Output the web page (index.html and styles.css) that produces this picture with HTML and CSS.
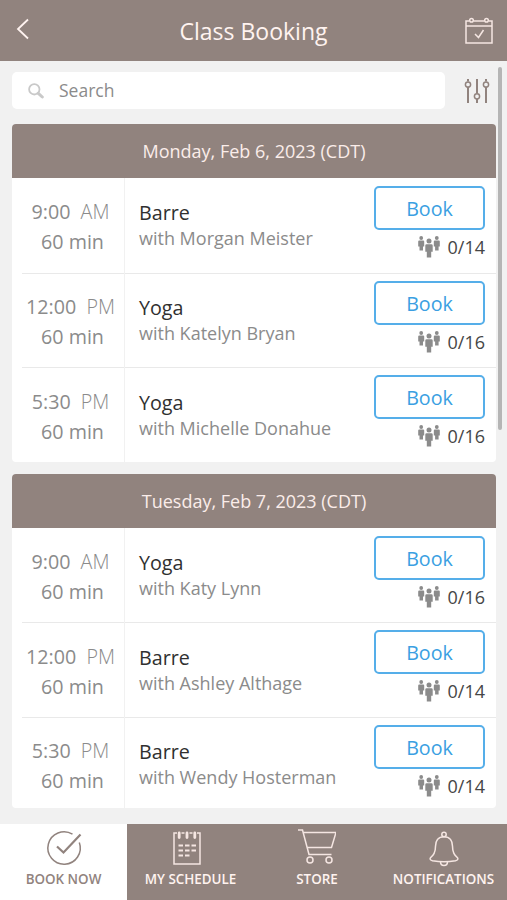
FILE: index.html
```html
<!DOCTYPE html>
<html lang="en">
<head>
<meta charset="utf-8">
<title>Class Booking</title>
<link rel="stylesheet" href="styles.css">
</head>
<body>
<svg class="defs" aria-hidden="true">
  <symbol id="people" viewBox="0 0 22 22">
    <g fill="#8b8b8b">
      <circle cx="3.2" cy="2" r="1.9"/>
      <path d="M1.2 4.400h4q1 0 1 1v5h-1.200v4.100H1.500v-4.100H.2v-5q0-1 1-1z"/>
      <circle cx="18.800" cy="2" r="1.900"/>
      <path d="M16.800 4.400h4q1 0 1 1v5h-1.200v4.100h-3.500v-4.100h-1.300v-5q0-1 1-1z"/>
      <circle cx="11" cy="5.100" r="2.500"/>
      <path d="M8.600 8.200h4.800q1.300 0 1.300 1.300v6.200h-1.500v5.900H8.800v-5.900H7.300V9.500q0-1.300 1.300-1.300z"/>
    </g>
  </symbol>
</svg>
<div class="app">
  <header class="topbar">
    <svg class="back" viewBox="0 0 14 22"><path d="M12 1.500 2 11l10 9.500"/></svg>
    <h1>Class Booking</h1>
    <svg class="calendar" viewBox="0 0 28 28"><path d="M4.500 4H1v22h26V4h-3.500M8.500 4h11M1 9h26"/><circle cx="6.500" cy="3.200" r="1.800"/><circle cx="21.500" cy="3.200" r="1.800"/><path d="M10 17l3.500 3.500L18.500 13"/></svg>
  </header>
  <main class="content">
    <div class="search-row">
      <div class="search">
        <svg viewBox="0 0 16 16"><circle cx="6.300" cy="6.300" r="5.200"/><path class="handle" d="M10.300 10.300 14.300 14"/></svg>
        <span>Search</span>
      </div>
      <svg class="filter" viewBox="0 0 26 26"><path d="M4 1v2.500M4 9v16M13 1v14.500M13 21v4M22 1v2.500M22 9v16"/><g class="knob"><circle cx="4" cy="6.500" r="2.600"/><circle cx="13" cy="18.300" r="2.600"/><circle cx="22" cy="6.500" r="2.600"/></g></svg>
    </div>
    <section class="day">
      <h2>Monday, Feb 6, 2023 (CDT)</h2>
      <article class="slot raised">
        <div class="when"><p>9:00 <i>AM</i></p><p>60 min</p></div>
        <div class="what"><h3>Barre</h3><p>with Morgan Meister</p></div>
        <div class="action"><button>Book</button><div class="count"><svg><use href="#people"/></svg>0/14</div></div>
      </article>
      <article class="slot short raised">
        <div class="when"><p>12:00 <i>PM</i></p><p>60 min</p></div>
        <div class="what"><h3>Yoga</h3><p>with Katelyn Bryan</p></div>
        <div class="action"><button>Book</button><div class="count"><svg><use href="#people"/></svg>0/16</div></div>
      </article>
      <article class="slot">
        <div class="when"><p>5:30 <i>PM</i></p><p>60 min</p></div>
        <div class="what"><h3>Yoga</h3><p>with Michelle Donahue</p></div>
        <div class="action"><button>Book</button><div class="count"><svg><use href="#people"/></svg>0/16</div></div>
      </article>
    </section>
    <section class="day">
      <h2>Tuesday, Feb 7, 2023 (CDT)</h2>
      <article class="slot short raised">
        <div class="when"><p>9:00 <i>AM</i></p><p>60 min</p></div>
        <div class="what"><h3>Yoga</h3><p>with Katy Lynn</p></div>
        <div class="action"><button>Book</button><div class="count"><svg><use href="#people"/></svg>0/16</div></div>
      </article>
      <article class="slot">
        <div class="when"><p>12:00 <i>PM</i></p><p>60 min</p></div>
        <div class="what"><h3>Barre</h3><p>with Ashley Althage</p></div>
        <div class="action"><button>Book</button><div class="count"><svg><use href="#people"/></svg>0/14</div></div>
      </article>
      <article class="slot last raised">
        <div class="when"><p>5:30 <i>PM</i></p><p>60 min</p></div>
        <div class="what"><h3>Barre</h3><p>with Wendy Hosterman</p></div>
        <div class="action"><button>Book</button><div class="count"><svg><use href="#people"/></svg>0/14</div></div>
      </article>
    </section>
    <div class="scrollbar"></div>
  </main>
  <nav class="tabs">
    <a class="tab active"><svg viewBox="0 -1 38 38"><path d="M34.300 12.500A16.200 16.200 0 1 1 27.500 4.200"/><path class="tick" d="M12 16.500l6.500 6L35.500 4.500"/></svg>BOOK NOW</a>
    <a class="tab schedule"><svg viewBox="0 -1 38 38"><path d="M9 3H6v31h26V3h-3M13.500 3h3M21.500 3h3"/><path class="rings" d="M11.200 3v4.500M19 3v4.500M26.800 3v4.500"/><path class="lines" d="M10.500 15.500h4.500M17 15.500h4.500M23.500 15.500H28M10.500 20.500h4.500M17 20.500h4.500M23.500 20.500H28M10.500 25.500h4.500M17 25.500h4.500"/></svg>MY SCHEDULE</a>
    <a class="tab"><svg viewBox="0 0 38 38"><path d="M0 1h4.500l6.500 24.500h22.500M5.500 3.500H38L33.500 18.500H9"/><circle cx="12" cy="31" r="3"/><circle cx="31" cy="31" r="3"/></svg>STORE</a>
    <a class="tab"><svg viewBox="0 -1 38 38"><circle cx="19" cy="4.500" r="2.200"/><path d="M19 6.700c-6 0-8.500 4.500-8.500 9.500 0 7-2.500 9-5 11.500-1 1.500 0 2.500 2 3 7 1.300 16 1.300 23 0 2-.5 3-1.500 2-3-2.500-2.500-5-4.500-5-11.500 0-5-2.500-9.500-8.500-9.500z"/><path d="M15.500 31.700c0 5 7 5 7 0"/></svg>NOTIFICATIONS</a>
  </nav>
</div>
</body>
</html>
```

FILE: styles.css
```css
* { box-sizing: border-box; margin: 0; padding: 0; }
body { font-family: "Open Sans", sans-serif; background: #f1f1f1; color: #8b8b8b; }
svg { fill: none; flex: none; }
.defs { position: absolute; width: 0; height: 0; }
.app { width: 507px; height: 900px; display: flex; flex-direction: column; overflow: hidden; white-space: nowrap; }

.topbar { height: 61px; flex: none; background: #91837e; display: grid; grid-template-columns: 60px 1fr 60px; align-items: center; }
.topbar h1 { font-size: 23px; font-weight: 400; line-height: 32px; color: #fff3f0; text-align: center; padding-top: 1px; }
.back { width: 14px; height: 22px; margin: 0 0 4px 16px; stroke: #fff3f0; stroke-width: 1.800; }
.calendar { width: 28px; height: 28px; margin: 1px 0 0 18px; stroke: #f5e6e2; stroke-width: 1.500; }

.content { position: relative; flex: 1; padding: 11px 11px 0 12px; }
.search-row { display: flex; align-items: center; height: 37px; margin-bottom: 15px; }
.search { width: 433px; height: 37px; border-radius: 5px; background: #fff; display: flex; align-items: center; padding-left: 16px; gap: 15px; font-size: 17.500px; }
.search span { line-height: 24px; padding-bottom: 2px; }
.search svg { width: 16px; height: 16px; stroke: #c9c9c9; stroke-width: 1.800; }
.search .handle { stroke-width: 3; stroke-linecap: round; }
.filter { width: 26px; height: 26px; margin-left: 19px; stroke: #91837e; stroke-width: 2; }
.filter .knob { stroke-width: 1.500; }

.day { border-radius: 4px; overflow: hidden; background: #fff; margin-bottom: 12px; }
.day h2 { height: 54px; line-height: 54px; background: #91837e; color: #fbedea; font-size: 18px; font-weight: 400; text-align: center; }
.slot { height: 95px; display: grid; grid-template-columns: 113px 1fr 111px; padding-right: 11px; background: linear-gradient(#e9e9e9, #e9e9e9) 10px 0 / 100% 1px no-repeat; }
h2 + .slot { background: none; }
.slot.short { height: 94px; }
.slot.last { height: 91px; }
.when { border-right: 1px solid #f1f1f1; padding: 20px 0 0 5px; text-align: center; font-size: 19.700px; line-height: 30px; }
.when p + p { padding-left: 4px; }
.when i { font-style: normal; font-weight: 300; margin-left: 5px; }
.raised .when { padding-top: 19px; }
.what { padding: 22px 0 0 14px; }
.raised .what { padding-top: 21px; }
.what h3 { font-size: 19.700px; line-height: 28px; font-weight: 400; color: #303030; }
.what p { font-size: 18px; line-height: 23px; }
.action { padding-top: 8px; }
.action button { display: block; width: 111px; height: 44px; border: 2px solid #55aee9; border-radius: 5px; background: #fff; color: #3b9fe2; font: 400 19.700px/40px "Open Sans", sans-serif; text-align: center; padding-top: 1px; }
.count { display: flex; align-items: center; justify-content: flex-end; gap: 8px; height: 24px; margin-top: 5px; font-size: 18px; color: #464646; }
.count svg { width: 22px; height: 22px; }
.scrollbar { position: absolute; top: 6px; right: 5px; width: 4px; height: 363px; border-radius: 2px; background: #b5b5b5; }

.tabs { flex: none; height: 76px; display: grid; grid-template-columns: 127px 127px 126px 127px; }
.tab { background: #91837e; color: #fff3f0; font-size: 13.400px; font-weight: 600; line-height: 18px; display: flex; flex-direction: column; align-items: center; padding-top: 5px; }
.tab svg { width: 38px; height: 38px; margin-bottom: 3px; stroke: #f5e6e2; stroke-width: 1.500; }
.tab.schedule svg { margin-right: 7px; }
.tab .rings { stroke-width: 2.800; stroke-linecap: round; }
.tab .lines { stroke-width: 2; }
.tab.active { background: #fff; color: #91837e; }
.tab.active svg { stroke: #91837e; }
.tab.active .tick { stroke-width: 2.200; }
```
